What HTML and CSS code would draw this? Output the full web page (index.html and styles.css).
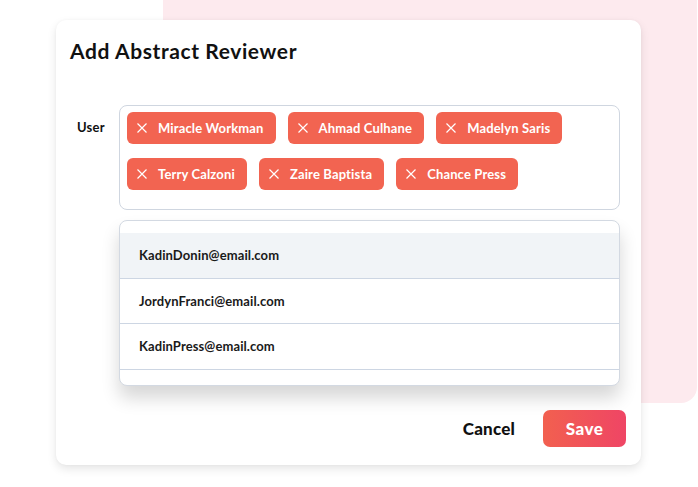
FILE: index.html
```html
<!DOCTYPE html>
<html>
<head>
<meta charset="utf-8">
<link rel="stylesheet" href="styles.css">
</head>
<body>
<div class="backdrop"></div>
<div class="card">
  <h1 class="title">Add Abstract Reviewer</h1>
  <div class="field">
    <div class="label">User</div>
    <div class="controls">
      <div class="tagbox">
        <span class="tag"><svg class="x" viewBox="0 0 10 10"><path d="M0.5 0.5L9.5 9.5M9.5 0.5L0.5 9.5"/></svg>Miracle Workman</span>
        <span class="tag"><svg class="x" viewBox="0 0 10 10"><path d="M0.5 0.5L9.5 9.5M9.5 0.5L0.5 9.5"/></svg>Ahmad Culhane</span>
        <span class="tag"><svg class="x" viewBox="0 0 10 10"><path d="M0.5 0.5L9.5 9.5M9.5 0.5L0.5 9.5"/></svg>Madelyn Saris</span>
        <span class="tag"><svg class="x" viewBox="0 0 10 10"><path d="M0.5 0.5L9.5 9.5M9.5 0.5L0.5 9.5"/></svg>Terry Calzoni</span>
        <span class="tag"><svg class="x" viewBox="0 0 10 10"><path d="M0.5 0.5L9.5 9.5M9.5 0.5L0.5 9.5"/></svg>Zaire Baptista</span>
        <span class="tag"><svg class="x" viewBox="0 0 10 10"><path d="M0.5 0.5L9.5 9.5M9.5 0.5L0.5 9.5"/></svg>Chance Press</span>
      </div>
      <div class="dropdown">
        <div class="option active">KadinDonin@email.com</div>
        <div class="option">JordynFranci@email.com</div>
        <div class="option">KadinPress@email.com</div>
      </div>
    </div>
  </div>
  <div class="actions">
    <button class="btn-cancel">Cancel</button>
    <button class="btn-save">Save</button>
  </div>
</div>
</body>
</html>
```

FILE: styles.css
```css
* { box-sizing: border-box; }
html, body {
  margin: 0;
  padding: 0;
  background: #ffffff;
}
body {
  width: 698px;
  height: 487px;
  position: relative;
  overflow: hidden;
  font-family: Lato, "Noto Sans", sans-serif;
  color: #111111;
  padding-top: 20px;
}
.backdrop {
  position: absolute;
  left: 163px;
  top: -16px;
  width: 534px;
  height: 419px;
  background: #fdeaee;
  border-radius: 16px;
}
.card {
  position: relative;
  margin-left: 56px;
  width: 585px;
  height: 445px;
  background: #ffffff;
  border-radius: 10px;
  box-shadow: 0 4px 10px rgba(0, 0, 0, 0.10), 0 0 3px rgba(0, 0, 0, 0.04);
  padding: 17px 15px 0 14px;
}
.title {
  margin: 0;
  font-size: 21px;
  font-weight: 700;
  line-height: 28px;
  color: #111111;
  letter-spacing: 0.6px;
}
.field {
  display: flex;
  margin-top: 40px;
  margin-left: 7px;
}
.label {
  width: 42px;
  font-size: 13px;
  font-weight: 700;
  padding-top: 14px;
  line-height: 16px;
  letter-spacing: 0.2px;
}
.controls {
  width: 501px;
}
.tagbox {
  border: 1px solid #cfd6e0;
  border-radius: 8px;
  padding: 6px 7px 18px 7px;
  display: flex;
  flex-wrap: wrap;
  column-gap: 12px;
  row-gap: 14px;
  height: 105px;
  align-content: flex-start;
}
.tag {
  display: inline-flex;
  align-items: center;
  height: 32px;
  padding: 0 12px 0 10px;
  background: #f26451;
  color: #ffffff;
  border-radius: 6px;
  font-size: 13px;
  font-weight: 700;
  letter-spacing: 0.15px;
}
.x {
  width: 10px;
  height: 10px;
  margin-right: 11px;
  fill: none;
  stroke: #ffffff;
  stroke-width: 1.2;
}
.dropdown {
  margin-top: 10px;
  border: 1px solid #d3d9e2;
  border-radius: 8px;
  padding: 12px 0 15px 0;
  background: #ffffff;
  box-shadow: 0 12px 18px rgba(0, 0, 0, 0.16);
}
.option {
  height: 45.5px;
  display: flex;
  align-items: center;
  padding-left: 19px;
  font-size: 13px;
  font-weight: 700;
  color: #1a1a1a;
  letter-spacing: 0.1px;
  border-bottom: 1px solid #cdd6e3;
}
.option.active {
  background: #f1f4f7;
}
.actions {
  display: flex;
  justify-content: flex-end;
  align-items: center;
  gap: 28px;
  margin-top: 24px;
}
.btn-cancel {
  border: none;
  background: none;
  padding: 0;
  font-family: Lato, "Noto Sans", sans-serif;
  font-size: 17px;
  font-weight: 900;
  color: #111111;
  letter-spacing: 0.2px;
}
.btn-save {
  border: none;
  width: 83px;
  height: 37px;
  border-radius: 7px;
  background: linear-gradient(90deg, #f2604f 0%, #ef4565 100%);
  color: #ffffff;
  font-family: Lato, "Noto Sans", sans-serif;
  font-size: 17px;
  font-weight: 900;
  letter-spacing: 0.5px;
}
```
